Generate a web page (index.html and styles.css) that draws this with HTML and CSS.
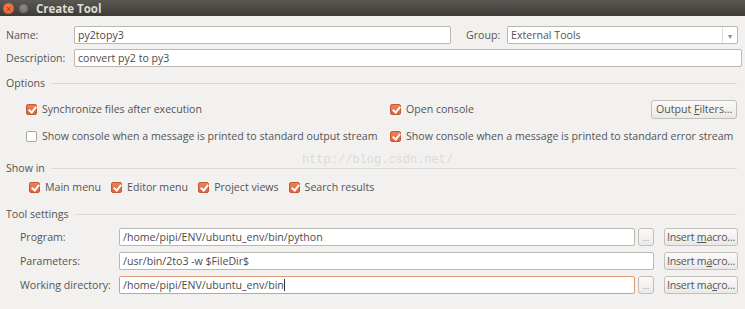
FILE: index.html
```html
<!DOCTYPE html>
<html lang="en">
<head>
  <meta charset="UTF-8">
  <title>Create Tool</title>
  <link rel="stylesheet" href="styles.css">
</head>
<body>
  <div class="titlebar">
    <span class="win-btn win-close">×</span>
    <span class="win-btn win-min"></span>
    <span class="title">Create Tool</span>
  </div>

  <div class="content">
    <div class="field-row first">
      <label class="label-col">Name:</label>
      <input class="text-input name-input" type="text" value="py2topy3">
      <label class="group-label">Group:</label>
      <div class="select">
        <span class="select-value">External Tools</span>
        <span class="select-arrow">▾</span>
      </div>
    </div>
    <div class="field-row">
      <label class="label-col">Description:</label>
      <input class="text-input grow" type="text" value="convert py2 to py3">
    </div>

    <div class="section-head options-head">
      <span>Options</span>
      <span class="section-line"></span>
    </div>
    <div class="options-grid">
      <label class="check"><span class="box checked"></span>Synchronize files after execution</label>
      <label class="check"><span class="box checked"></span>Open console</label>
      <button class="btn filters-btn">Output <u>F</u>ilters...</button>
      <label class="check"><span class="box"></span>Show console when a message is printed to standard output stream</label>
      <label class="check span-2"><span class="box checked"></span>Show console when a message is printed to standard error stream</label>
    </div>

    <div class="section-head showin-head">
      <span>Show in</span>
      <span class="section-line"></span>
    </div>
    <div class="showin-row">
      <label class="check"><span class="box checked"></span>Main menu</label>
      <label class="check"><span class="box checked"></span>Editor menu</label>
      <label class="check"><span class="box checked"></span>Project views</label>
      <label class="check"><span class="box checked"></span>Search results</label>
    </div>

    <div class="section-head tool-head">
      <span>Tool settings</span>
      <span class="section-line"></span>
    </div>
    <div class="tool-grid">
      <label class="tool-label">Program:</label>
      <input class="text-input" type="text" value="/home/pipi/ENV/ubuntu_env/bin/python">
      <button class="btn dots-btn">...</button>
      <button class="btn macro-btn">Insert <u>m</u>acro...</button>

      <label class="tool-label">Parameters:</label>
      <input class="text-input span-2" type="text" value="/usr/bin/2to3 -w $FileDir$">
      <button class="btn macro-btn">Insert m<u>a</u>cro...</button>

      <label class="tool-label">Working directory:</label>
      <div class="text-input focused">/home/pipi/ENV/ubuntu_env/bin<span class="caret"></span></div>
      <button class="btn dots-btn">...</button>
      <button class="btn macro-btn">Insert ma<u>c</u>ro...</button>
    </div>

    <div class="watermark">http://blog.csdn.net/</div>
  </div>
</body>
</html>
```

FILE: styles.css
```css
* {
  box-sizing: border-box;
  margin: 0;
  padding: 0;
}

body {
  width: 745px;
  height: 309px;
  overflow: hidden;
  background-color: #f2f1f0;
  color: #555452;
  font-family: 'Open Sans', 'DejaVu Sans', sans-serif;
  font-size: 10.6px;
}

/* window title bar */
.titlebar {
  height: 16px;
  display: flex;
  align-items: center;
  padding-left: 3px;
  background: linear-gradient(#5a5852, #3c3b37);
}

.win-btn {
  width: 11px;
  height: 11px;
  border-radius: 50%;
  display: inline-flex;
  align-items: center;
  justify-content: center;
  font-size: 9px;
  line-height: 1;
}

.win-close {
  background: radial-gradient(circle at 50% 40%, #f5845a, #df4f24);
  color: #8a3213;
}

.win-min {
  margin-left: 4px;
  background: radial-gradient(circle at 50% 40%, #8d8b85, #65635e);
  border: 1px solid #4d4c48;
}

.title {
  margin-left: 7px;
  color: #dfdbd2;
  font-weight: 700;
  font-size: 11.5px;
}

.content {
  position: relative;
  padding: 0 3px 0 6px;
}

/* top fields */
.field-row {
  display: flex;
  align-items: center;
  height: 18px;
  margin-top: 5px;
}

.field-row.first {
  margin-top: 10px;
}

.label-col {
  width: 68px;
  flex-shrink: 0;
}

.text-input {
  height: 18px;
  border: 1px solid #bab7b2;
  border-radius: 2px;
  background-color: #fff;
  padding: 0 3px;
  font-family: inherit;
  font-size: 10.6px;
  color: #4c4c4c;
  display: flex;
  align-items: center;
  outline: none;
  min-width: 0;
}

.grow {
  flex: 1;
}

.name-input {
  width: 377px;
}

.group-label {
  width: 41px;
  margin-left: 15px;
}

.select {
  flex: 1;
  margin-right: 4px;
  height: 18px;
  display: flex;
  border: 1px solid #bab7b2;
  border-radius: 2px;
  background-color: #fff;
}

.select-value {
  flex: 1;
  padding-left: 3px;
  display: flex;
  align-items: center;
}

.select-arrow {
  width: 15px;
  border-left: 1px solid #dedcd8;
  color: #8a8883;
  font-size: 8px;
  display: flex;
  align-items: center;
  justify-content: center;
}

/* section headers */
.section-head {
  display: flex;
  align-items: center;
  height: 12px;
}

.section-line {
  flex: 1;
  margin: 0 5px 0 6px;
  border-top: 1px solid #dcdad6;
}

.options-head {
  margin-top: 10px;
}

.showin-head {
  margin-top: 16px;
}

.tool-head {
  margin-top: 11px;
}

/* checkboxes */
.check {
  display: flex;
  align-items: center;
  white-space: nowrap;
}

.box {
  width: 11px;
  height: 11px;
  margin-right: 5px;
  border: 1px solid #aaa7a2;
  border-radius: 2px;
  background-color: #fff;
  flex-shrink: 0;
  position: relative;
}

.box.checked {
  border-color: #c45a33;
  background: linear-gradient(#ef8058, #e0643a);
}

.box.checked::after {
  content: '';
  position: absolute;
  left: 3px;
  top: 0;
  width: 3px;
  height: 6px;
  border: solid #fff;
  border-width: 0 2px 2px 0;
  transform: rotate(40deg);
}

.options-grid {
  display: grid;
  grid-template-columns: 364px 1fr auto;
  grid-auto-rows: 20px;
  row-gap: 7px;
  align-items: center;
  margin-top: 10px;
  padding-left: 20px;
  padding-right: 5px;
}

.showin-row {
  display: flex;
  gap: 10px;
  height: 20px;
  align-items: center;
  margin-top: 3px;
  padding-left: 23px;
}

/* buttons */
.btn {
  height: 18px;
  border: 1px solid #c2bfba;
  border-radius: 3px;
  background: linear-gradient(#fbfaf9, #ebe9e6);
  color: #555452;
  font-family: inherit;
  font-size: 10.6px;
  padding: 0 4px;
  white-space: nowrap;
}

.filters-btn {
  width: 86px;
  height: 19px;
}

.dots-btn {
  width: 16px;
  margin-left: 3px;
  padding: 0;
  font-size: 8px;
  color: #9a9893;
}

.macro-btn {
  width: 74px;
  margin-left: 10px;
  padding: 0 1px;
  letter-spacing: -0.2px;
  overflow: hidden;
}

/* tool settings */
.tool-grid {
  display: grid;
  grid-template-columns: 99px 1fr 19px 84px;
  grid-auto-rows: 18px;
  row-gap: 6px;
  align-items: center;
  margin-top: 8px;
  padding-left: 14px;
  padding-right: 4px;
}

.span-2 {
  grid-column: span 2;
}

.focused {
  border-color: #e29a78;
}

.caret {
  display: inline-block;
  width: 1px;
  height: 12px;
  background-color: #333;
}

.watermark {
  position: absolute;
  left: 302px;
  top: 127px;
  font-family: 'Liberation Mono', monospace;
  font-size: 12px;
  color: #dcdad7;
}
```
